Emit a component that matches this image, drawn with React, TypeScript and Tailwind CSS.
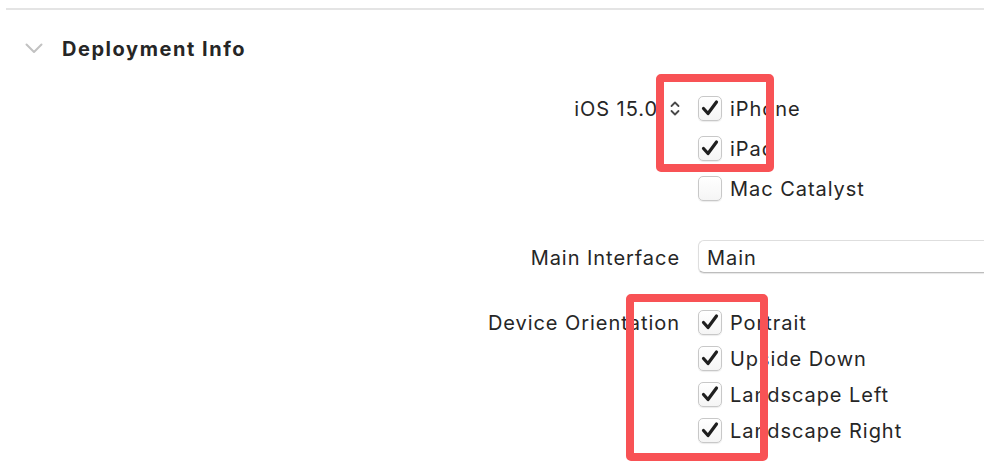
import React from "react";

const FONT = { fontFamily: "Inter, 'Liberation Sans', sans-serif" };

function Checkbox({ checked }: { checked: boolean }) {
  return (
    <span className="flex h-[25px] w-[24px] shrink-0 items-center justify-center rounded-[5px] border border-[#c8c8c8] bg-gradient-to-b from-white to-[#f5f5f5] shadow-[0_1px_1px_rgba(0,0,0,0.08)]">
      {checked && (
        <svg width="20" height="20" viewBox="0 0 20 20" fill="none">
          <path d="M3.5 10.5 L8 15.5 L16.5 4" stroke="#1f1f1f" strokeWidth="3.2" strokeLinecap="round" strokeLinejoin="round" />
        </svg>
      )}
    </span>
  );
}

function CheckRow({ label, checked, h }: { label: string; checked: boolean; h: string }) {
  return (
    <div className={`flex items-center gap-[8px] ${h}`}>
      <Checkbox checked={checked} />
      <span className="pt-[2px]">{label}</span>
    </div>
  );
}

export default function App() {
  return (
    <div className="relative h-[468px] w-[984px] overflow-hidden bg-white" style={FONT}>
      {/* separator */}
      <div className="ml-[6px] pt-[8px]">
        <div className="h-[2px] bg-[#e4e4e4]" />
      </div>

      {/* section header */}
      <div className="mt-[17px] flex h-[42px] items-center">
        <svg className="ml-[25px]" width="18" height="11" viewBox="0 0 18 11" fill="none">
          <path d="M1.5 1.5 L9 9 L16.5 1.5" stroke="#c2c2c2" strokeWidth="2" strokeLinecap="round" strokeLinejoin="round" />
        </svg>
        <h2 className="ml-[19px] pt-[2px] text-[20px] font-bold tracking-[1.55px] text-[#262626]">Deployment Info</h2>
      </div>

      {/* form */}
      <div className="mt-[19px] grid grid-cols-[680px_1fr] gap-x-[18px] text-[20px] tracking-[0.95px] text-[#262626]">
        <div className="flex h-[40px] items-center justify-end gap-[12px]">
          <span className="pt-[2px]">iOS 15.0</span>
          <svg width="10" height="15" viewBox="0 0 10 15" fill="none">
            <path d="M1.5 5 L5 1.5 L8.5 5 M1.5 10 L5 13.5 L8.5 10" stroke="#4a4a4a" strokeWidth="1.8" strokeLinecap="round" strokeLinejoin="round" />
          </svg>
        </div>
        <div>
          <CheckRow label="iPhone" checked h="h-[40px]" />
          <CheckRow label="iPad" checked h="h-[40px]" />
          <CheckRow label="Mac Catalyst" checked={false} h="h-[40px]" />
        </div>

        <div className="mt-[32px] flex h-[33px] items-center justify-end pt-[2px]">Main Interface</div>
        <div className="mt-[32px] flex h-[33px] items-center rounded-l-[6px] border border-r-0 border-[#dedede] border-b-[#bdbdbd] bg-white pl-[8px] pt-[2px] shadow-[0_1px_1px_rgba(0,0,0,0.1)]">
          Main
        </div>

        <div className="mt-[31px] flex h-[36px] items-center justify-end pt-[2px]">Device Orientation</div>
        <div className="mt-[31px]">
          <CheckRow label="Portrait" checked h="h-[36px]" />
          <CheckRow label="Upside Down" checked h="h-[36px]" />
          <CheckRow label="Landscape Left" checked h="h-[36px]" />
          <CheckRow label="Landscape Right" checked h="h-[36px]" />
        </div>
      </div>

      {/* annotation boxes */}
      <div className="pointer-events-none absolute left-[656px] top-[74px] h-[98px] w-[118px] rounded-[5px] border-[8px] border-[#f85255]" />
      <div className="pointer-events-none absolute left-[626px] top-[294px] h-[167px] w-[142px] rounded-[5px] border-[8px] border-[#f85255]" />
    </div>
  );
}
